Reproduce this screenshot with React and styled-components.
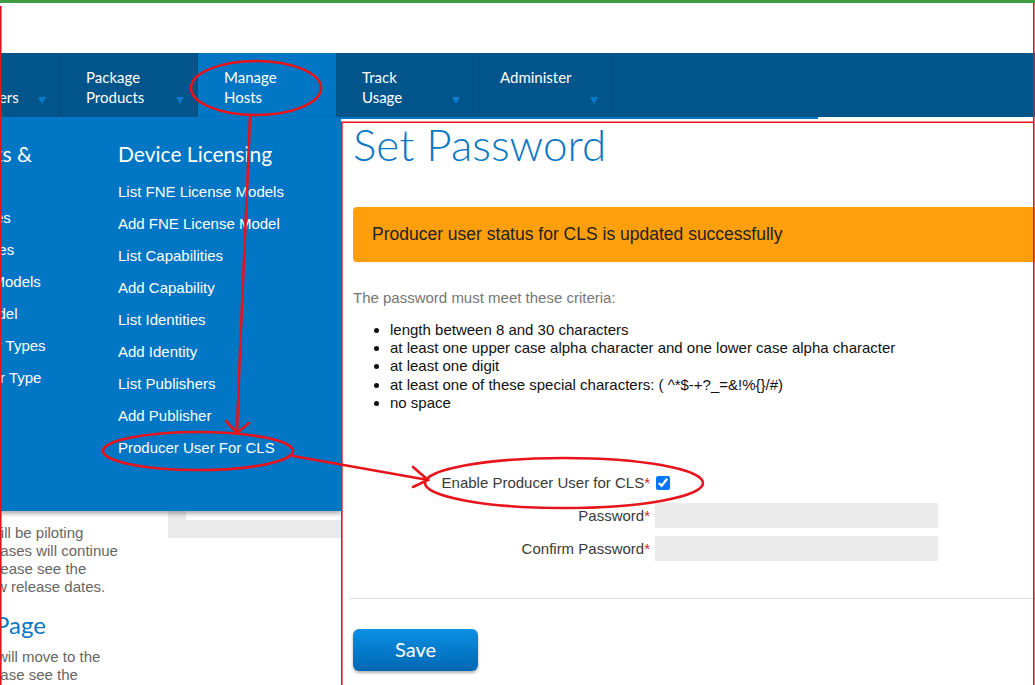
import React from 'react';
import styled, { createGlobalStyle } from 'styled-components';

const GlobalStyle = createGlobalStyle`
  html, body {
    margin: 0;
    padding: 0;
    background: #fff;
  }
  body {
    width: 1035px;
    height: 685px;
    overflow: hidden;
    font-family: 'Liberation Sans', Arial, sans-serif;
  }
`;

const navTabs = [
  { lines: ['Manage', 'Customers'], caret: true },
  { lines: ['Package', 'Products'], caret: true },
  { lines: ['Manage', 'Hosts'], caret: false, active: true },
  { lines: ['Track', 'Usage'], caret: true },
  { lines: ['Administer'], caret: true },
];

const hostItems = [
  'List Devices',
  'Add Devices',
  'List Host Models',
  'Import Model',
  'List Server Types',
  'Add Server Type',
];

const deviceItems = [
  'List FNE License Models',
  'Add FNE License Model',
  'List Capabilities',
  'Add Capability',
  'List Identities',
  'Add Identity',
  'List Publishers',
  'Add Publisher',
  'Producer User For CLS',
];

const criteria = [
  'length between 8 and 30 characters',
  'at least one upper case alpha character and one lower case alpha character',
  'at least one digit',
  'at least one of these special characters: ( ^*$-+?_=&!%{}/#)',
  'no space',
];

const App = () => {
  return (
    <>
      <GlobalStyle />
      <Frame>
        <Header />
        <NavBar>
          {navTabs.map((tab, i) => (
            <NavTab key={i} $active={tab.active}>
              <NavLabel>
                {tab.lines.map((l) => (
                  <span key={l}>{l}</span>
                ))}
              </NavLabel>
              {tab.caret && <Caret />}
            </NavTab>
          ))}
        </NavBar>
        <Body>
          <LeftPane>
            <LeftPage>
              <TextCol>
                <PageLine $shift={-10}>will be piloting</PageLine>
                <PageLine $shift={-8}>eases will continue</PageLine>
                <PageLine $shift={-3}>lease see the</PageLine>
                <PageLine $shift={-4}>w release dates.</PageLine>
                <PageHeading>Page</PageHeading>
                <PageLine $shift={-3}>will move to the</PageLine>
                <PageLine $shift={-8}>ease see the</PageLine>
              </TextCol>
              <SideCol>
                <GreyBox>
                  <WhiteBar />
                </GreyBox>
              </SideCol>
            </LeftPage>
            <MegaMenu>
              <MenuCol $width={112} $offset={-70}>
                <MenuHeading>Products &amp; Hosts</MenuHeading>
                {hostItems.map((item) => (
                  <MenuItem key={item}>{item}</MenuItem>
                ))}
              </MenuCol>
              <MenuCol $width={220} $offset={76}>
                <MenuHeading>Device Licensing</MenuHeading>
                {deviceItems.map((item) => (
                  <MenuItem key={item}>{item}</MenuItem>
                ))}
              </MenuCol>
            </MegaMenu>
          </LeftPane>
          <Main>
            <ActiveLine />
            <Title>Set Password</Title>
            <Alert>Producer user status for CLS is updated successfully</Alert>
            <Criteria>The password must meet these criteria:</Criteria>
            <CriteriaList>
              {criteria.map((c) => (
                <li key={c}>{c}</li>
              ))}
            </CriteriaList>
            <Form>
              <Label>
                Enable Producer User for CLS<Req>*</Req>
              </Label>
              <Check type='checkbox' defaultChecked />
              <Label>
                Password<Req>*</Req>
              </Label>
              <Field type='password' />
              <Label>
                Confirm Password<Req>*</Req>
              </Label>
              <Field type='password' />
            </Form>
            <Divider />
            <SaveButton>Save</SaveButton>
          </Main>
        </Body>
        <Annotations width='1035' height='685' viewBox='0 0 1035 685'>
          <g fill='none' stroke='#e5141c' strokeWidth='1.6'>
            <path d='M0.8 3 V684.2 H1033.8 V0' />
            <path d='M341.8 684 V119.2 H1034' />
          </g>
          <g fill='none' stroke='#e8141c' strokeWidth='2.6' strokeLinecap='round'>
            <ellipse cx='256' cy='85' rx='65' ry='27' />
            <path d='M250 112 C247 200 240 330 237 430' />
            <path d='M226 418 L237 430 L249 420' />
            <ellipse cx='198' cy='448' rx='95' ry='19' />
            <path d='M293 453 L428 477' />
            <path d='M413 464 L428 477 L413 484' />
            <ellipse cx='564' cy='480' rx='139' ry='25' />
          </g>
        </Annotations>
      </Frame>
    </>
  );
};

export default App;

const Frame = styled.div`
  position: relative;
  width: 1035px;
  height: 685px;
  overflow: hidden;
  border-top: 3px solid #3f9c44;
  box-sizing: border-box;
`;

const Header = styled.div`
  height: 50px;
  background: #fff;
`;

const NavBar = styled.nav`
  display: flex;
  height: 64px;
  margin-left: -78px;
  background: #02558b;
`;

const NavTab = styled.div`
  flex: none;
  width: 138px;
  box-sizing: border-box;
  display: flex;
  justify-content: space-between;
  padding: 14px 13px 13px 26px;
  border-right: 1px solid ${(p) => (p.$active ? '#0076c4' : '#044c7c')};
  background: ${(p) => (p.$active ? '#0076c4' : 'transparent')};
  color: #fff;
  font-family: Lato, 'Open Sans', sans-serif;
  font-size: 15px;
  line-height: 20px;
`;

const NavLabel = styled.div`
  display: flex;
  flex-direction: column;
`;

const Caret = styled.span`
  align-self: flex-end;
  width: 0;
  height: 0;
  border-left: 4.5px solid transparent;
  border-right: 4.5px solid transparent;
  border-top: 7px solid #0a7bcc;
`;

const Body = styled.div`
  display: flex;
  height: 568px;
`;

const LeftPane = styled.div`
  position: relative;
  flex: none;
  width: 341px;
`;

const LeftPage = styled.div`
  display: flex;
  padding-top: 380px;
`;

const TextCol = styled.div`
  flex: none;
  width: 160px;
  overflow: hidden;
  padding-top: 27px;
  color: #666;
  font-size: 15px;
  line-height: 18px;
`;

const PageLine = styled.div`
  margin-left: ${(p) => p.$shift}px;
  white-space: nowrap;
`;

const PageHeading = styled.div`
  margin: 14px 0 8px -5px;
  font-family: Lato, 'Open Sans', sans-serif;
  font-size: 24px;
  line-height: 30px;
  color: #0a77c4;
`;

const SideCol = styled.div`
  flex: 1;
  padding-left: 8px;
`;

const GreyBox = styled.div`
  height: 41px;
  padding-left: 18px;
  background: #eaeaea;
`;

const WhiteBar = styled.div`
  height: 23px;
  background: #fff;
`;

const MegaMenu = styled.div`
  position: absolute;
  top: 0;
  left: 0;
  z-index: 2;
  width: 341px;
  height: 394px;
  display: flex;
  box-sizing: border-box;
  padding-top: 24px;
  background: #0076c4;
  box-shadow: 0 3px 4px rgba(0, 0, 0, 0.3);
  overflow: hidden;
`;

const MenuCol = styled.div`
  flex: none;
  width: ${(p) => p.$width}px;
  margin-left: ${(p) => p.$offset}px;
  display: flex;
  flex-direction: column;
  color: #fff;
`;

const MenuHeading = styled.div`
  margin-bottom: 9px;
  font-family: Lato, 'Open Sans', sans-serif;
  font-size: 21px;
  line-height: 26px;
`;

const MenuItem = styled.div`
  font-size: 15px;
  line-height: 32px;
  white-space: nowrap;
`;

const Main = styled.div`
  flex: 1;
  min-width: 0;
  overflow: hidden;
  padding-left: 12px;
`;

const ActiveLine = styled.div`
  width: 477px;
  height: 2px;
  margin-left: -12px;
  background: #0076c4;
`;

const Title = styled.h1`
  margin: 1px 0 0;
  font-family: Lato, 'Open Sans', sans-serif;
  font-weight: 300;
  font-size: 44px;
  line-height: 48px;
  color: #0a77c4;
`;

const Alert = styled.div`
  margin: 39px -20px 0 0;
  height: 55px;
  padding: 0 19px;
  border-radius: 4px 0 0 4px;
  background: #ff9f0c;
  color: #222;
  font-size: 17.5px;
  line-height: 55px;
`;

const Criteria = styled.p`
  margin: 27px 0 0;
  color: #767676;
  font-size: 15px;
  line-height: 18px;
`;

const CriteriaList = styled.ul`
  margin: 14px 0 0;
  padding-left: 37px;
  color: #111;
  font-size: 15px;
  line-height: 18.2px;
`;

const Form = styled.div`
  display: grid;
  grid-template-columns: 297px 283px;
  grid-auto-rows: 25px;
  column-gap: 5px;
  row-gap: 8px;
  margin-top: 58px;
  align-items: center;
`;

const Label = styled.label`
  text-align: right;
  color: #3a3a3a;
  font-size: 15px;
`;

const Req = styled.span`
  color: #d2232a;
`;

const Check = styled.input`
  justify-self: start;
  width: 14px;
  height: 14px;
  margin: 0 0 0 1px;
  accent-color: #0075ff;
`;

const Field = styled.input`
  height: 25px;
  box-sizing: border-box;
  border: none;
  background: #ebebeb;
  outline: none;
`;

const Divider = styled.hr`
  margin: 37px -20px 0 -3px;
  border: none;
  border-top: 1px solid #dddddd;
`;

const SaveButton = styled.button`
  display: block;
  margin-top: 30px;
  width: 125px;
  height: 42px;
  border: none;
  border-radius: 6px;
  background: linear-gradient(#0b90e4, #0067b2);
  box-shadow: 0 2px 3px rgba(0, 0, 0, 0.3);
  color: #fff;
  font-family: Lato, 'Open Sans', sans-serif;
  font-size: 20px;
  padding-bottom: 3px;
`;

const Annotations = styled.svg`
  position: absolute;
  top: 0;
  left: 0;
  z-index: 5;
  pointer-events: none;
`;
